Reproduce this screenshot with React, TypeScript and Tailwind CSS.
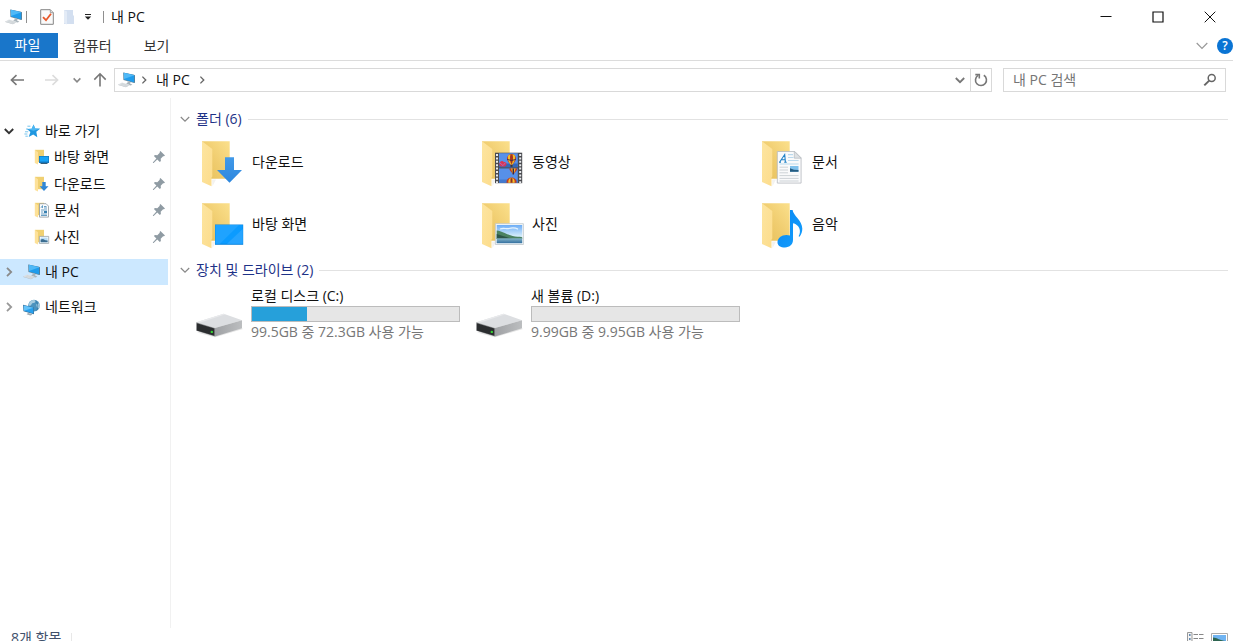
import { useState } from "react";
import type { ReactNode } from "react";

function PcIcon({ className = "h-4 w-[18px]" }: { className?: string }) {
  return (
    <svg viewBox="0 0 18 16" className={`shrink-0 ${className}`} aria-hidden="true">
      <path d="M5.200.4 16.200 2.800v8.200L5.400 8z" fill="#6b8594" />
      <path d="M5.800.8 16.500 3.200v7.300L6 7.600z" fill="#1f9cec" />
      <path d="M5.800.8 16.500 3.200 6 7z" fill="#4fb9f7" />
      <path d="M16.200 3l.7.3v7.500l-.7.2z" fill="#3c6785" />
      <path d="M9.600 9.300l3 .8-.4 1.600 2.200.8-1.600.9-5-1.400 1.600-.9z" fill="#a9b4bb" />
      <path d="M.2 12.400 4 10.600l7.600 2.200-3.700 2.300z" fill="#dde1e4" />
      <path d="M.2 12.400l7.700 2.400 3.700-1.900v.4l-3.700 2-7.700-2.400z" fill="#b5bcc1" />
      <path d="M2.400 12.100l7 2M3.800 11.500l6.600 1.900" stroke="#c2c9cd" strokeWidth=".4" />
    </svg>
  );
}

type ChevronProps = { dir?: "down" | "right"; className?: string; stroke?: number };

function Chevron({ dir = "down", className = "h-[10px] w-[10px]", stroke = 1.4 }: ChevronProps) {
  return (
    <svg
      viewBox="0 0 10 10"
      className={`shrink-0 ${className}`}
      fill="none"
      stroke="currentColor"
      strokeWidth={stroke}
      aria-hidden="true"
    >
      <path d={dir === "down" ? "M.8 3 5 7.2 9.2 3" : "M3 .8 7.2 5 3 9.2"} />
    </svg>
  );
}

function Arrow({ dir, className = "" }: { dir: "left" | "right" | "up"; className?: string }) {
  const paths = {
    left: "M14 8H1.4M6.500 3.200 1.400 8l5.100 4.800",
    right: "M1 8h12.600M8.500 3.200 13.600 8l-5.100 4.800",
    up: "M7 14.500V1.800M1.300 7.600 7 1.800l5.700 5.800",
  };
  return (
    <svg viewBox="0 0 15 15" className={`h-[15px] w-[15px] shrink-0 ${className}`} fill="none" stroke="currentColor" strokeWidth="1.6" aria-hidden="true">
      <path d={paths[dir]} />
    </svg>
  );
}

function PinIcon() {
  return (
    <svg viewBox="0 0 14 14" className="h-[14px] w-[14px] shrink-0" fill="#8f9ba3" aria-hidden="true">
      <path d="M8.4 1 13 5.5l-1 .8-.9-.1-2.4 2.5.2 2.3-1.1 1L5.3 9.4 1.6 13 .9 13.1l.1-.8 3.4-3.8L1.900 6l1-1 2.400.2 2.500-2.400-.2-.9z" />
    </svg>
  );
}

function StarIcon() {
  return (
    <svg viewBox="0 0 17 16" className="h-4 w-[17px] shrink-0" aria-hidden="true">
      <path d="M9.6 1.4l1.5 4.2 5 .1-3.8 3.1 1 5.4-4.1-2.8-4.5 2.5 1.7-5L3 6l4.7-.3z" fill="#1f97e0" />
      <path d="M9.6 1.4l1.5 4.2 5 .1-6.6 2.1L3 6l4.7-.3z" fill="#4db7f2" />
      <path d="M3.4 3.2h3M1 8.8h3.2M.4 11h3M1.4 13.2h2.4M2 6h2" stroke="#69bdea" strokeWidth=".9" />
    </svg>
  );
}

function NetworkIcon() {
  return (
    <svg viewBox="0 0 18 17" className="h-[17px] w-[18px] shrink-0" aria-hidden="true">
      <circle cx="11" cy="6.6" r="5.8" fill="#4b93be" />
      <path d="M7.4 2.2c2-1.5 4-1.2 5.4-.5l-1.2 2-2.4.6-1.4 2.2-2 .2c0-1.8.6-3.3 1.6-4.5zM13.2 5.4l2.800-1.100c1 1.800 1 3.700.2 5.300l-2.100-.8z" fill="#a8cde0" />
      <path d="M12.6 1.6c2.5 2.7 2.8 6.9 1 10" fill="none" stroke="#2e729f" strokeWidth=".7" />
      <path d="M0 5.800 11 8.400v6.900L.5 12.300z" fill="#3a6f96" />
      <path d="M.7 6.500l9.700 2.300v5.700L1 11.800z" fill="#27a0ee" />
      <path d="M.7 6.500l9.700 2.300L1 11.800z" fill="#63c3fa" />
      <path d="M5 13.900l3 .9 1.400.9-2 .7-3.800-1.200z" fill="#9ba9b2" />
    </svg>
  );
}

type Kind = "download" | "video" | "document" | "desktop" | "picture" | "music";

function SmallFolder({ kind }: { kind: Kind }) {
  return (
    <svg viewBox="0 0 16 16" className="h-4 w-4 shrink-0" aria-hidden="true">
      <path d="M1 .8h9v12.400H1z" fill="#f0d072" />
      <path d="M.8.800 4 3.200v12.300l-3.200-1.400z" fill="#fde199" />
      {kind === "desktop" && (
        <>
          <path d="M5 7h10v7H5z" fill="#1374b8" />
          <path d="M5.6 7.6h8.8v5H5.600z" fill="#19a4f7" />
          <path d="M6.5 14h7v1h-7z" fill="#335e7b" />
        </>
      )}
      {kind === "download" && <path d="M8.300 6h3.400v4.300H14.500L10 15 5.600 10.300h2.700z" fill="#2e86d6" />}
      {kind === "document" && (
        <>
          <path d="M5.5 1.7h6.600l2.400 2.400v11h-9z" fill="#fbfcfd" stroke="#8c979e" strokeWidth=".8" />
          <path d="M7 5.800 8.500 3.600v2.500M10 4.500h2.500M10 6h3M7 8h6M7 10h2.200M7 12h6M7 13.500h6" stroke="#5794bd" strokeWidth=".9" fill="none" />
          <path d="M10 9h3v2h-3z" fill="#3780b0" />
        </>
      )}
      {kind === "picture" && (
        <>
          <path d="M5.400 7.400h9.300v7H5.400z" fill="#fff" stroke="#96a2aa" strokeWidth=".8" />
          <path d="M6.600 8.500h7v4.800h-7z" fill="#b9dcf6" />
          <path d="M6.600 10.500l2.400-.5 2.500 1.300 2.100.1v1.900h-7z" fill="#3b6d91" />
        </>
      )}
    </svg>
  );
}

function Balloon({ x, y }: { x: number; y: number }) {
  return (
    <g transform={`translate(${x} ${y})`}>
      <path d="M-4.500 0a4.500 4.500 0 0 1 9 0C4.500 2.700 2.100 4.300 1 6h-2c-1.100-1.700-3.500-3.300-3.500-6z" fill="#bf301f" />
      <path d="M-3.300-3C-4.300 0-2.900 3.300-1 6h2c1.900-2.700 3.300-6 2.300-9A4.500 4.500 0 0 0-3.300-3z" fill="#f4bd25" />
      <path d="M-1-4.400C-2-1-1.500 3 0 6c1.500-3 2-7 1-10.400z" fill="#a53322" />
      <path d="M-4.300.8Q0 3 4.300.8" stroke="#352a50" strokeWidth=".9" fill="none" />
      <path d="M-1 6.500h2v1.600h-2z" fill="#472d18" />
    </g>
  );
}

function Overlay({ kind }: { kind: Kind }) {
  switch (kind) {
    case "download":
      return <path d="M29 17.300h9V30h8L33.500 42.700 21 30h8z" fill="url(#arrowBlue)" />;
    case "desktop":
      return (
        <>
          <path d="M19 22.500h28.200v20.300H19z" fill="#0a84dc" />
          <path d="M19.500 23h27.200v18.700H19.500z" fill="#0b9bff" />
          <path d="M19.500 23H43L24 41.700h-4.500z" fill="#1fa3ff" />
          <path d="M46.700 27v14.700H31z" fill="#26a4ff" />
        </>
      );
    case "video":
      return (
        <>
          <path d="M19 12.700h27.200v30.500H19z" fill="#4a4b4f" />
          <path d="M23 13.200h18.800v14H23z" fill="#5790e8" />
          <path d="M23 28.400h18.800v14.300H23z" fill="#5790e8" />
          <path d="M23 23.500h18.800v3.700H23z" fill="#3468b9" />
          <path d="M23 39.500h18.800v3.200H23z" fill="#4379cf" />
          <path d="M23.400 23.500c.5-2.600 3.300-3.400 4.500-1.200 1.300-1 2.700.2 2.600 2-.1 1.500-1.300 2.300-2.600 2.300h-2.700c-1.200 0-2-1.500-1.800-3.100z" fill="#da3653" />
          <path d="M24 23l3 2.600 2.500-3" stroke="#af66be" strokeWidth="1" fill="none" />
          <Balloon x={35.5} y={18.6} />
          <path d="M33.300 28.400h8c0 2.500-2.400 3.300-3 5h-2c-.6-1.700-3-2.500-3-5z" fill="#c43b20" />
          <path d="M35 28.400h4.600l-1.600 5h-1.400z" fill="#f1b828" />
          <path d="M36.600 28.400h1.400v6h-1.400z" fill="#31264a" />
          <path d="M30.500 42.700c-.6-7 10.600-7 10 0z" fill="#c63a1f" />
          <path d="M32.300 42.700c-.3-6.500 6.700-6.500 6.400 0z" fill="#f4c12c" />
          <path d="M34.500 42.700v-4.500h2v4.500z" fill="#8e2f24" />
          <path d="M21 14v29M44.200 14v29" stroke="#e8eaed" strokeWidth="2" strokeDasharray="2 1.400" />
        </>
      );
    case "picture":
      return (
        <>
          <path d="M19.400 21.700h28v20.800h-28z" fill="#f7f9fa" stroke="#bec5ca" strokeWidth=".8" />
          <path d="M20.700 23h25.500v18.200H20.700z" fill="url(#sky)" />
          <path d="M20.700 28.500c3 .2 5.500 1.400 8 2.500 2.500 1.500 5.500 1.800 8 3 3 .8 6.500.600 9.500 1.200v1.800H20.700z" fill="#4b8261" />
          <path d="M20.700 32c5 1.500 9 2.800 16 5h-16z" fill="#2c5548" />
          <path d="M20.700 36.300h25.500v4.900H20.700z" fill="url(#sea)" />
          <path d="M24 27c4-1.700 6 .3 9-.5s6-.9 9 .6" stroke="#e5f3fd" strokeWidth="1.200" fill="none" />
        </>
      );
    case "document":
      return (
        <>
          <path d="M21.300 11.500h17.500l6.300 6.300v25.300H21.300z" fill="#f9fafb" stroke="#b4b9be" strokeWidth=".8" />
          <path d="M38.300 11.500v6.700h6.800z" fill="#dde1e4" stroke="#b4b9be" strokeWidth=".7" />
          <path d="M23.700 22l5-7.500.7 7.500M25.500 19.700h3.700M23 22.300h2M28.200 22.300h2.500" stroke="#2082c8" strokeWidth="1.100" fill="none" />
          <path d="M32 14.600h5M32 17.500h5.500M32 20.500h10.600M23.500 24h19.100" stroke="#bad9ed" strokeWidth="1.100" />
          <path d="M23.500 27.200H32M23.500 30H32M23.500 32.800H32M23.500 35.600h19.100M23.500 38.400h19.100M23.500 41h19.100" stroke="#cdd2d6" strokeWidth="1" />
          <path d="M34 26h8.500v5.800H34z" fill="#7fc1ec" />
          <path d="M34 28.300l4 1.500 4.500.1v1.900H34z" fill="#245b80" />
        </>
      );
    case "music":
      return (
        <path
          d="M34 8h2.600c.5 5.500 9.700 10.500 9.700 18.500 0 3-.8 5.900-2.700 8.200l-1-.5c1.500-2.500 1.800-5.500.6-8.200-1.100-2.500-3.400-4.300-6.200-4.800v16.900c0 4.400-3.300 7.400-8 7.400-4.300 0-7.500-2-7.500-5.300 0-4 4-7.200 8.900-7.200 1.300 0 2.500.2 3.600.6z"
          fill="url(#musicBlue)"
        />
      );
  }
}

function FolderIcon({ kind }: { kind: Kind }) {
  return (
    <svg viewBox="0 0 48 48" className="h-12 w-12 shrink-0" aria-hidden="true">
      <path d="M16 39.500h4l-3.500 6.800z" fill="#f3f2ef" />
      <path d="M6 1.300h27.700v37.500H6z" fill="url(#folderBack)" />
      <path d="M6 1.300 16.300 9v27.400q-1 .6-.8 2.600v7.300L6 42z" fill="url(#folderFlap)" />
      <Overlay kind={kind} />
    </svg>
  );
}

function DriveIcon() {
  return (
    <svg viewBox="0 0 48 48" className="h-12 w-12 shrink-0" aria-hidden="true">
      <path d="M1 42.500 19 47.300l28-8.300-2-1z" fill="#e4e4e4" />
      <path d="M.3 32.300 27.700 23.700 46 30.300 19 38z" fill="#dcdee1" />
      <path d="M.3 32.300 27.700 23.700l1.800.6L3 33.100z" fill="#e9eaec" />
      <path d="M19 38l27-7.700v7.900l-27 8.300z" fill="url(#driveSide)" />
      <path d="M.3 32.300 19 38v8.500L.3 40.800z" fill="#8d8f91" />
      <path d="M.8 33.200 18.300 38.500v7.200L.8 40.400z" fill="#2b2d2f" />
      <circle cx="15.800" cy="41.900" r="1.200" fill="#35d333" />
    </svg>
  );
}

function SharedGradients() {
  return (
    <svg className="absolute h-0 w-0" aria-hidden="true">
      <defs>
        <linearGradient id="folderBack" x1="0" y1="1" x2="1" y2="0">
          <stop offset="0" stopColor="#e6bf59" />
          <stop offset=".5" stopColor="#f0cd70" />
          <stop offset="1" stopColor="#fbe08c" />
        </linearGradient>
        <linearGradient id="folderFlap" x1="0" y1="0" x2="1" y2="1">
          <stop offset="0" stopColor="#fde5a0" />
          <stop offset="1" stopColor="#fcdc8c" />
        </linearGradient>
        <linearGradient id="arrowBlue" x1="0" y1="0" x2="0" y2="1">
          <stop offset="0" stopColor="#4199e8" />
          <stop offset="1" stopColor="#2d87de" />
        </linearGradient>
        <linearGradient id="musicBlue" x1="0" y1="0" x2="1" y2="1">
          <stop offset="0" stopColor="#0a86f0" />
          <stop offset="1" stopColor="#14a0ff" />
        </linearGradient>
        <linearGradient id="sky" x1="0" y1="0" x2="0" y2="1">
          <stop offset="0" stopColor="#6dadf6" />
          <stop offset=".6" stopColor="#d3ebfb" />
        </linearGradient>
        <linearGradient id="sea" x1="0" y1="0" x2="0" y2="1">
          <stop offset="0" stopColor="#85b5c9" />
          <stop offset="1" stopColor="#336f9f" />
        </linearGradient>
        <linearGradient id="driveSide" x1="0" y1="0" x2="1" y2="0">
          <stop offset="0" stopColor="#9fa1a4" />
          <stop offset="1" stopColor="#bcbec0" />
        </linearGradient>
      </defs>
    </svg>
  );
}

const pinned: { label: string; kind: Kind }[] = [
  { label: "바탕 화면", kind: "desktop" },
  { label: "다운로드", kind: "download" },
  { label: "문서", kind: "document" },
  { label: "사진", kind: "picture" },
];

const folders: { label: string; kind: Kind }[] = [
  { label: "다운로드", kind: "download" },
  { label: "동영상", kind: "video" },
  { label: "문서", kind: "document" },
  { label: "바탕 화면", kind: "desktop" },
  { label: "사진", kind: "picture" },
  { label: "음악", kind: "music" },
];

const drives = [
  { label: "로컬 디스크 (C:)", detail: "99.5GB 중 72.3GB 사용 가능", used: 26.5 },
  { label: "새 볼륨 (D:)", detail: "9.99GB 중 9.95GB 사용 가능", used: 0 },
];

function TitleBar() {
  return (
    <header className="flex h-[33px] shrink-0 items-center pl-[5px]">
      <PcIcon />
      <span className="ml-[3px] h-3 w-px bg-[#8f8f8f]" />
      <button aria-label="속성" className="ml-[13px]">
        <svg viewBox="0 0 14 16" className="h-4 w-[14px]" aria-hidden="true">
          <path d="M.7.7h9.600l3 3v11.600H.7z" fill="#fafafa" stroke="#858585" strokeWidth="1" />
          <path d="M10.300.7v3h3" fill="#ddd" stroke="#858585" strokeWidth=".7" />
          <path d="M3 8.200l3 3L11 4.800" fill="none" stroke="#e8582a" strokeWidth="1.800" />
        </svg>
      </button>
      <button aria-label="새 폴더" className="ml-[9px]">
        <svg viewBox="0 0 12 16" className="h-4 w-3" aria-hidden="true">
          <path d="M1 1h9v5l1 1v8H1z" fill="#d3dff0" />
          <path d="M1 1l3 1.600v13L1 14z" fill="#e3ebf6" />
        </svg>
      </button>
      <button aria-label="빠른 실행 도구 모음 사용자 지정" className="ml-[9px]">
        <svg viewBox="0 0 8 8" className="h-2 w-2" aria-hidden="true">
          <path d="M1 1.500h6" stroke="#222" strokeWidth="1" />
          <path d="M.8 3.500h6.400L4 6.800z" fill="#222" />
        </svg>
      </button>
      <span className="ml-[11px] h-3 w-px bg-[#8f8f8f]" />
      <h1 className="ml-[7px]">내 PC</h1>
      <div className="ml-auto flex h-full">
        <button aria-label="최소화" className="grid w-[52px] place-items-center">
          <svg viewBox="0 0 12 12" className="h-3 w-3" aria-hidden="true"><path d="M.5 5.500h11" stroke="#111" /></svg>
        </button>
        <button aria-label="최대화" className="grid w-[52px] place-items-center">
          <svg viewBox="0 0 12 12" className="h-3 w-3" aria-hidden="true"><path d="M1 1h10v10H1z" fill="none" stroke="#111" strokeWidth="1.200" /></svg>
        </button>
        <button aria-label="닫기" className="grid w-[49px] place-items-center pl-[3px]">
          <svg viewBox="0 0 12 12" className="h-3 w-3" aria-hidden="true"><path d="M.7.700l10.600 10.600M11.300.7.700 11.300" stroke="#111" strokeWidth="1" /></svg>
        </button>
      </div>
    </header>
  );
}

function Ribbon() {
  return (
    <nav className="flex h-7 shrink-0 items-start border-b border-[#dcdcdc] text-[#333]">
      <button className="h-[25px] w-[58px] bg-[#1976ca] pb-px pr-[3px] text-white">파일</button>
      <button className="ml-[15px] h-[25px]">컴퓨터</button>
      <button className="ml-8 h-[25px]">보기</button>
      <button aria-label="리본 확장" className="ml-auto flex h-[25px] items-center text-[#999]">
        <svg viewBox="0 0 12 10" className="h-[10px] w-3" fill="none" stroke="currentColor" strokeWidth="1.200" aria-hidden="true">
          <path d="M.7 2 6 7.300 11.300 2" />
        </svg>
      </button>
      <button aria-label="도움말" className="ml-[9px] flex h-[25px] items-center">
        <span className="grid h-4 w-4 place-items-center rounded-full bg-[#0a74d4] text-xs font-semibold leading-4 text-white">?</span>
      </button>
    </nav>
  );
}

function AddressRow() {
  const [query, setQuery] = useState("");
  return (
    <div className="flex h-[37px] shrink-0 items-center pl-[10px] pr-[7px]">
      <button aria-label="뒤로" className="text-[#777]"><Arrow dir="left" /></button>
      <button aria-label="앞으로" className="ml-[19px] text-[#dcdcdc]"><Arrow dir="right" /></button>
      <button aria-label="최근 위치" className="ml-[14px] text-[#888]"><Chevron className="h-2 w-2" stroke={2} /></button>
      <button aria-label="위로" className="ml-3 text-[#777]"><Arrow dir="up" /></button>
      <div className="ml-[6px] flex h-6 flex-1 items-center border border-[#d9d9d9] pl-[3px]">
        <PcIcon />
        <Chevron dir="right" className="ml-[4px] h-2 w-2 text-[#666]" stroke={1.700} />
        <button className="ml-[8px]">내 PC</button>
        <Chevron dir="right" className="ml-[8px] h-2 w-2 text-[#666]" stroke={1.700} />
        <button aria-label="이전 위치" className="ml-auto mr-[5px] text-[#777]"><Chevron stroke={1.800} /></button>
        <button aria-label="새로 고침" className="grid h-full w-[21px] place-items-center border-l border-[#d9d9d9]">
          <svg viewBox="0 0 14 14" className="h-[14px] w-[14px]" fill="none" stroke="#777" strokeWidth="1.600" aria-hidden="true">
            <path d="M9.800 2.300A5.500 5.500 0 1 1 4 2.400" />
            <path d="M1.300 1.600h4v4" />
          </svg>
        </button>
      </div>
      <label className="ml-[11px] flex h-6 w-[223px] items-center border border-[#d9d9d9] pl-[9px] pr-2">
        <input
          type="search"
          aria-label="내 PC 검색"
          placeholder="내 PC 검색"
          value={query}
          onChange={(e) => setQuery(e.target.value)}
          className="min-w-0 flex-1 bg-transparent outline-none placeholder:text-[#757575]"
        />
        <svg viewBox="0 0 14 14" className="h-[14px] w-[14px]" fill="none" stroke="#666" strokeWidth="1.500" aria-hidden="true">
          <circle cx="8.700" cy="5" r="3.500" />
          <path d="M6.200 7.600 1.300 12.400" strokeWidth="2" />
        </svg>
      </label>
    </div>
  );
}

function Sidebar() {
  return (
    <nav className="w-[171px] shrink-0 border-r border-[#f1f1f1] pt-5">
      <a href="#quick" className="flex h-[26px] items-center pl-1">
        <Chevron className="mr-[10px] h-[10px] w-[10px] text-[#333]" stroke={1.900} />
        <StarIcon />
        <span className="ml-1">바로 가기</span>
      </a>
      <ul className="grid h-[106px] grid-rows-4">
        {pinned.map((item) => (
          <li key={item.label}>
            <a href={`#${item.kind}`} className="flex h-full items-center pl-[34px] pr-1">
              <SmallFolder kind={item.kind} />
              <span className="ml-1 flex-1">{item.label}</span>
              <PinIcon />
            </a>
          </li>
        ))}
      </ul>
      <a href="#pc" aria-current="page" className="mr-[2px] mt-[9px] flex h-[26px] items-center bg-[#cce8ff] pl-1">
        <Chevron dir="right" className="mr-[9px] h-[10px] w-[10px] text-[#8a8a8a]" stroke={1.800} />
        <PcIcon />
        <span className="ml-1">내 PC</span>
      </a>
      <a href="#network" className="mt-[9px] flex h-[26px] items-center pl-1">
        <Chevron dir="right" className="mr-[9px] h-[10px] w-[10px] text-[#999]" stroke={1.800} />
        <NetworkIcon />
        <span className="ml-1">네트워크</span>
      </a>
    </nav>
  );
}

function Group({ title, children }: { title: string; children: ReactNode }) {
  return (
    <section>
      <button className="flex h-5 w-full items-center text-[#1e3287]">
        <Chevron className="h-[10px] w-[10px] text-[#888]" stroke={1.200} />
        <span className="ml-[6px]">{title}</span>
        <span className="ml-[6px] h-px flex-1 bg-[#e2e2e2]" />
      </button>
      {children}
    </section>
  );
}

export default function App() {
  return (
    <div className="flex h-screen flex-col overflow-hidden bg-white font-['Open_Sans','Noto_Sans_CJK_KR',sans-serif] text-sm leading-5 text-[#111]">
      <SharedGradients />
      <TitleBar />
      <Ribbon />
      <AddressRow />
      <div className="flex min-h-0 flex-1">
        <Sidebar />
        <main className="flex min-w-0 flex-1 flex-col gap-[10px] pl-[9px] pr-[5px] pt-[11px]">
          <Group title="폴더 (6)">
            <ul className="mt-[11px] grid grid-cols-[repeat(auto-fill,280px)] gap-y-[14px] pl-4">
              {folders.map((f) => (
                <li key={f.label}>
                  <a href={`#${f.kind}`} className="flex h-12 gap-2">
                    <FolderIcon kind={f.kind} />
                    <span className="pt-3">{f.label}</span>
                  </a>
                </li>
              ))}
            </ul>
          </Group>
          <Group title="장치 및 드라이브 (2)">
            <ul className="mt-[6px] grid grid-cols-[repeat(auto-fill,280px)] pl-4">
              {drives.map((d) => (
                <li key={d.label}>
                  <a href="#drive" className="flex gap-[7px]">
                    <span className="pt-[4px]"><DriveIcon /></span>
                    <span className="flex w-[209px] flex-col">
                      <span>{d.label}</span>
                      <span
                        role="progressbar"
                        aria-label={d.label}
                        aria-valuenow={d.used}
                        className="block h-4 border border-[#bcbcbc] bg-[#e6e6e6]"
                      >
                        <span className="block h-full bg-[#26a0da]" style={{ width: `${d.used}%` }} />
                      </span>
                      <span className="whitespace-nowrap text-[#777]">{d.detail}</span>
                    </span>
                  </a>
                </li>
              ))}
            </ul>
          </Group>
        </main>
      </div>
      <footer className="flex h-[13px] shrink-0 items-start pl-[11px] text-[#41506b]">
        <span>8개 항목</span>
        <span className="ml-[10px] mt-[5px] h-4 w-px shrink-0 bg-[#e8e8e8]" />
        <button aria-label="자세히 보기" className="ml-auto mt-1">
          <svg viewBox="0 0 17 16" className="h-4 w-[17px]" aria-hidden="true">
            <path d="M.5.500h4.500v14H.5z" fill="#f4f4f4" stroke="#999" />
            <path d="M2 3h1.600M2 7h1.600M2 11h1.600" stroke="#35679a" strokeWidth="1.500" />
            <path d="M6.500 2.500H11M12 2.500h4.500M6.500 6.500H11M12 6.500h4.500M6.500 10.500H11M12 10.500h4.500" stroke="#888" />
          </svg>
        </button>
        <button aria-label="큰 아이콘 보기" className="ml-[7px] mr-[5px] mt-[5px]">
          <svg viewBox="0 0 17 16" className="h-4 w-[17px]" aria-hidden="true">
            <path d="M.5.500h16v13H.5z" fill="#fff" stroke="#aaa" />
            <path d="M2 2h13v10H2z" fill="#70b4f2" />
            <path d="M2 4.500c4 .2 7 3 13 3.500v4H2z" fill="#2d6550" />
            <path d="M2 9h13v3H2z" fill="#3b7fb5" />
          </svg>
        </button>
      </footer>
    </div>
  );
}
